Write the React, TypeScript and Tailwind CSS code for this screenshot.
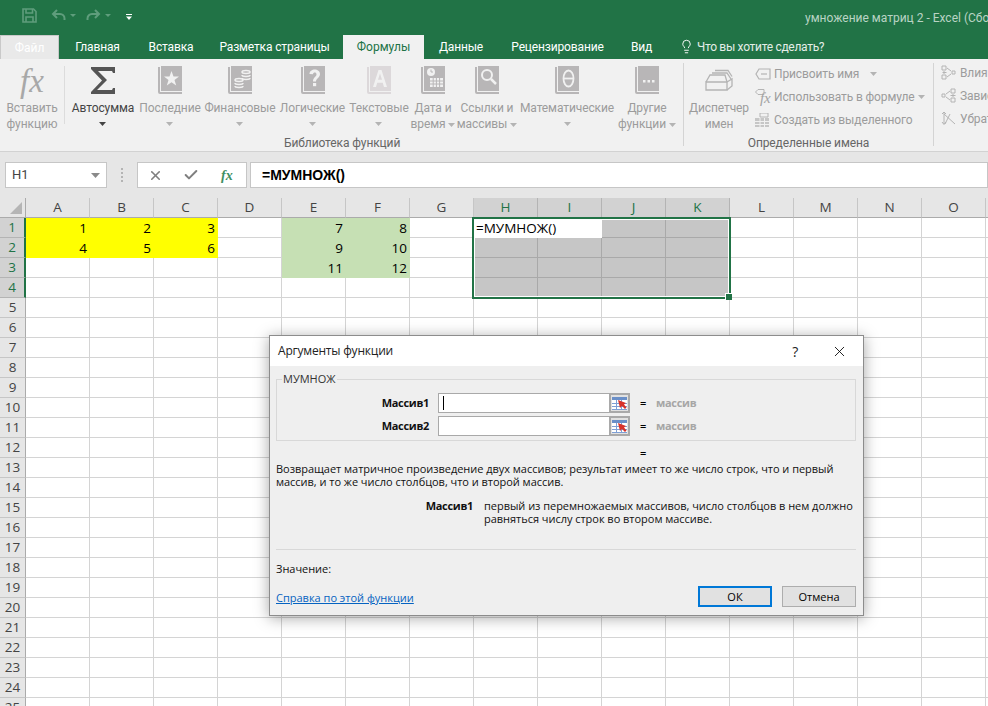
import { Check, Lightbulb, X } from "lucide-react";
import type { ReactNode } from "react";

const UI = "font-['Roboto',sans-serif]";
const COLS = ["A", "B", "C", "D", "E", "F", "G", "H", "I", "J", "K", "L", "M", "N", "O", "P"];
const ACTIVE_COLS = ["H", "I", "J", "K"];

const VALUES: Record<string, string> = {
  A1: "1", B1: "2", C1: "3", A2: "4", B2: "5", C2: "6",
  E1: "7", F1: "8", E2: "9", F2: "10", E3: "11", F3: "12",
};

function cellClass(col: string, row: number) {
  if (row <= 2 && (col === "A" || col === "B" || col === "C")) return "bg-[#ffff00] border-[#ffff00]";
  if (row <= 3 && (col === "E" || col === "F")) return "bg-[#c6e0b4] border-[#c6e0b4]";
  if (row === 1 && col === "H") return "bg-white border-white";
  if (row === 1 && col === "I") return "bg-white border-white";
  if (row <= 4 && ACTIVE_COLS.includes(col)) return "bg-[#c6c6c6] border-[#a9a9a9]";
  return "bg-white border-[#d4d4d4]";
}

function Caret({ dark = false }: { dark?: boolean }) {
  return (
    <svg width="7" height="4" viewBox="0 0 7 4" className="inline-block">
      <path d="M0 0h7L3.5 4z" fill={dark ? "#444444" : "#b4b4b4"} />
    </svg>
  );
}

function Book({ children }: { children?: ReactNode }) {
  return (
    <svg width="24" height="29" viewBox="0 0 24 29">
      <path d="M0 1h2v25h22v2H2a2 2 0 0 1-2-2z" fill="#b8b6b7" />
      <rect x="3" y="0" width="21" height="25" fill="#b8b6b7" />
      {children}
    </svg>
  );
}

function RibbonButton(props: { w: string; icon: ReactNode; lines: string[]; dark?: boolean; inlineCaret?: boolean }) {
  const { w, icon, lines, dark, inlineCaret } = props;
  return (
    <div className={`${w} flex flex-col items-center shrink-0`}>
      <div className="h-[34px] flex items-start justify-center">{icon}</div>
      <div className={`text-[12px] leading-[16px] tracking-[-0.1px] text-center whitespace-nowrap ${dark ? "text-[#444444]" : "text-[#9c9c9c]"}`}>
        <div>{lines[0]}</div>
        {lines[1] ? (
          <div>
            {lines[1]}
            {inlineCaret && (
              <span className="ml-[3px] align-middle inline-flex"><Caret /></span>
            )}
          </div>
        ) : (
          <div className="h-[16px] flex items-center justify-center"><Caret dark={dark} /></div>
        )}
      </div>
    </div>
  );
}

function TitleBar() {
  return (
    <div className="h-[35px] bg-[#217346] flex items-center relative">
      <svg width="15" height="15" viewBox="0 0 15 15" className="ml-[22px] mt-[-4px]" fill="none" stroke="#5f9d7c" strokeWidth="1.6">
        <path d="M1 1h10.5L14 3.5V14H1z" />
        <path d="M4 1v4h6.5V1M4 14V9h7v5" />
      </svg>
      <svg width="15" height="14" viewBox="0 0 15 14" className="ml-[14px] mt-[-4px]" fill="none" stroke="#5f9d7c" strokeWidth="2">
        <path d="M6 1 2 5l4 4M2 5h7a4.5 4.5 0 0 1 4.5 4.5V11" />
      </svg>
      <svg width="6" height="3" viewBox="0 0 6 3" className="ml-[4px] mt-[-4px]"><path d="M0 0h6L3 3z" fill="#5f9d7c" /></svg>
      <svg width="15" height="14" viewBox="0 0 15 14" className="ml-[10px] mt-[-4px]" fill="none" stroke="#5f9d7c" strokeWidth="2">
        <path d="m9 1 4 4-4 4M13 5H6a4.5 4.5 0 0 0-4.5 4.5V11" />
      </svg>
      <svg width="6" height="3" viewBox="0 0 6 3" className="ml-[4px] mt-[-4px]"><path d="M0 0h6L3 3z" fill="#5f9d7c" /></svg>
      <svg width="6" height="6" viewBox="0 0 6 6" className="ml-[15px] mt-[-2px]"><path d="M0 0h6v1H0zM0 2.5h6L3 6z" fill="#ffffff" /></svg>
      <div className={`${UI} absolute left-[805px] top-[10px] text-[12px] leading-[16px] text-[#b9d3c4] whitespace-nowrap`}>
        умножение матриц 2 - Excel (Сбой активации продукта)
      </div>
    </div>
  );
}

function Tabs() {
  const tab = "text-[12px] leading-[24px] tracking-[-0.15px] text-white whitespace-nowrap text-center shrink-0";
  return (
    <div className={`${UI} h-[24px] bg-[#217346] flex`}>
      <div className="w-[59px] h-[24px] bg-[#e9e9e9] border border-[#c9c9c9] border-b-0 text-[12px] leading-[24px] text-white text-center">Файл</div>
      <div className={`${tab} w-[77px]`}>Главная</div>
      <div className={`${tab} w-[70px]`}>Вставка</div>
      <div className={`${tab} w-[137px]`}>Разметка страницы</div>
      <div className="w-[81px] bg-[#f1f1f1] text-[12px] leading-[24px] text-[#217346] text-center">Формулы</div>
      <div className={`${tab} w-[74px]`}>Данные</div>
      <div className={`${tab} w-[119px]`}>Рецензирование</div>
      <div className={`${tab} w-[49px]`}>Вид</div>
      <Lightbulb size={15} strokeWidth={1.5} className="text-white ml-[13px] mt-[4px]" />
      <div className="ml-[3px] text-[12px] leading-[24px] tracking-[-0.3px] text-[#e4eee8] whitespace-nowrap">Что вы хотите сделать?</div>
    </div>
  );
}

function ListItem({ icon, label, caret }: { icon: ReactNode; label: string; caret?: string }) {
  return (
    <div className="h-[23px] flex items-center whitespace-nowrap text-[12px] tracking-[-0.12px] text-[#9c9c9c]">
      <span className="w-[19px] flex shrink-0">{icon}</span>
      <span>{label}</span>
      {caret && <span className={`${caret} inline-flex`}><Caret /></span>}
    </div>
  );
}

function Ribbon() {
  const bookGlyph = "#f1f1f1";
  return (
    <div className={`${UI} h-[93px] bg-[#f1f1f1] border-b border-[#d2d2d2] flex overflow-hidden`}>
      <div className="w-[66px] shrink-0 h-[92px] pt-[7px] flex">
        <div className="w-[65px] h-[58px] border-r border-[#dcdcdc] flex flex-col items-center">
          <RibbonButton
            w="w-[63px]"
            lines={["Вставить", "функцию"]}
            icon={<span className="font-['Liberation_Serif',serif] italic text-[33px] leading-[30px] text-[#a8a8a8]">fx</span>}
          />
        </div>
      </div>

      <div className="w-[618px] shrink-0 border-r border-[#d4d4d4] h-[83px] mt-[4px] relative">
        <div className="flex pl-[4px] pt-[3px]">
          <RibbonButton
            w="w-[66px]"
            dark
            lines={["Автосумма"]}
            icon={
              <svg width="24" height="27" viewBox="0 0 24 27" className="mt-[1px]">
                <path d="M0 0h24v6h-2l-1-2H7l9 9L6 23h15l1-2h2v6H0v-2l11-11.500L0 2z" fill="#555555" />
              </svg>
            }
          />
          <div className="w-[2px]" />
          <RibbonButton
            w="w-[64px]"
            lines={["Последние"]}
            icon={<Book><path d="m13.500 5 2 5.500h5.500l-4.500 3.500 1.700 5.500-4.700-3.300-4.700 3.300 1.700-5.500L6 10.500h5.500z" fill={bookGlyph} /></Book>}
          />
          <RibbonButton
            w="w-[76px]"
            lines={["Финансовые"]}
            icon={
              <Book>
                <g fill="none" stroke={bookGlyph} strokeWidth="1.500">
                  <ellipse cx="18" cy="6" rx="4" ry="1.500" />
                  <path d="M14 9c0 2 8 2 8 0M14 12c0 2 8 2 8 0" />
                  <ellipse cx="11" cy="14" rx="4" ry="1.500" />
                  <path d="M7 17c0 2 8 2 8 0M7 20c0 2 8 2 8 0" />
                </g>
              </Book>
            }
          />
          <RibbonButton
            w="w-[69px]"
            lines={["Логические"]}
            icon={
              <Book>
                <path d="M8.500 8c0-6 10.500-6 10.500 0 0 4-4 4-4 7.500h-3c0-4.500 3.500-4.500 3.500-7.300 0-2.200-3.500-2.200-3.500 0z" fill={bookGlyph} />
                <rect x="12" y="17" width="3.200" height="3.200" fill={bookGlyph} />
              </Book>
            }
          />
          <RibbonButton
            w="w-[64px]"
            lines={["Текстовые"]}
            icon={
              <svg width="24" height="29" viewBox="0 0 24 29">
                <path d="M0 1h2v25h22v2H2a2 2 0 0 1-2-2z" fill="#dcd8da" />
                <rect x="3" y="0" width="21" height="25" fill="#dcd8da" />
                <path d="m11.500 4 h3l5.500 17h-3l-1.300-4.300h-5.500L9 21H6zm1.500 3.500-2 6.300h4z" fill={bookGlyph} />
              </svg>
            }
          />
          <RibbonButton
            w="w-[44px]"
            lines={["Дата и", "время"]}
            inlineCaret
            icon={
              <Book>
                <circle cx="10" cy="6" r="4" fill={bookGlyph} />
                <path d="M10 3.500V6h2" stroke="#b8b6b7" fill="none" />
                <path d="M9 12h13v9H9z" fill={bookGlyph} />
                <path d="M12.200 12v9M15.400 12v9M18.600 12v9M9 15h13M9 18h13" stroke="#b8b6b7" />
              </Book>
            }
          />
          <div className="w-[2px]" />
          <RibbonButton
            w="w-[60px]"
            lines={["Ссылки и", "массивы"]}
            inlineCaret
            icon={
              <Book>
                <circle cx="12" cy="9" r="5" fill="none" stroke={bookGlyph} strokeWidth="2" />
                <path d="m16 13 5 5" stroke={bookGlyph} strokeWidth="2.500" />
              </Book>
            }
          />
          <RibbonButton
            w="w-[100px]"
            lines={["Математические"]}
            icon={
              <Book>
                <ellipse cx="13.500" cy="12.500" rx="5" ry="8" fill="none" stroke={bookGlyph} strokeWidth="1.800" />
                <path d="M9 12.500h9" stroke={bookGlyph} strokeWidth="1.800" />
              </Book>
            }
          />
          <RibbonButton
            w="w-[60px]"
            lines={["Другие", "функции"]}
            inlineCaret
            icon={
              <Book>
                <rect x="8" y="14" width="2.500" height="2.500" fill={bookGlyph} />
                <rect x="12.500" y="14" width="2.500" height="2.500" fill={bookGlyph} />
                <rect x="17" y="14" width="2.500" height="2.500" fill={bookGlyph} />
              </Book>
            }
          />
        </div>
        <div className="absolute left-[218px] top-[72px] text-[12px] leading-[16px] tracking-[-0.1px] text-[#666666]">Библиотека функций</div>
      </div>

      <div className="w-[250px] shrink-0 border-r border-[#d4d4d4] h-[83px] mt-[4px] relative">
        <div className="flex pl-[2px] pt-[3px]">
          <RibbonButton
            w="w-[66px]"
            lines={["Диспетчер", "имен"]}
            icon={
              <svg width="28" height="24" viewBox="0 0 28 24" className="mt-[3px]" fill="none" stroke="#b4b4b4" strokeWidth="1.300">
                <path d="M1 13h21v8H1z" />
                <path d="m22 21 5-4v-7l-5 3M1 13l4-7h15l2 7" />
                <path d="M7 4h15l4 6M10 1.500h13l4 6" />
              </svg>
            }
          />
          <div className="pl-[3px] mt-[-4px] w-[180px]">
            <ListItem
              label="Присвоить имя"
              caret="ml-[11px]"
              icon={
                <svg width="16" height="12" viewBox="0 0 16 12" fill="none" stroke="#b4b4b4" strokeWidth="1.200">
                  <path d="M4 1h11v10H4L1 6z" />
                  <path d="M6 6h6" />
                </svg>
              }
            />
            <ListItem
              label="Использовать в формуле"
              caret="ml-[3px]"
              icon={
                <span className="relative w-[16px] h-[16px] flex">
                  <svg width="10" height="8" viewBox="0 0 10 8" fill="none" stroke="#b4b4b4">
                    <path d="M3 .500h6v5H3L.500 3z" />
                  </svg>
                  <span className="absolute left-[5px] top-[1px] font-['Liberation_Serif',serif] italic text-[15px] leading-[16px] text-[#a3a3a3]">fx</span>
                </span>
              }
            />
            <ListItem
              label="Создать из выделенного"
              icon={
                <svg width="14" height="14" viewBox="0 0 14 14">
                  <path d="M0 5h14v9H0z" fill="#c6c6c6" />
                  <path d="M5 0h8v4H5z" fill="none" stroke="#b4b4b4" />
                  <path d="M0 8.500h14M0 11.500h14M5 5v9M9.500 5v9" stroke="#f1f1f1" />
                </svg>
              }
            />
          </div>
        </div>
        <div className="absolute left-0 right-0 top-[72px] text-center text-[12px] leading-[16px] tracking-[-0.1px] text-[#666666]">Определенные имена</div>
      </div>

      <div className="pl-[7px] pt-[2px]">
        <ListItem
          label="Влияющие ячейки"
          icon={<svg width="15" height="15" viewBox="0 0 15 15" fill="none" stroke="#b4b4b4"><path d="M1 1h4v4H1zM1 10h4v4H1zM11 6h3v3h-3zM3 6v3M1.500 7.500h4M6 3l4 3M6 12l4-3" /></svg>}
        />
        <ListItem
          label="Зависимые ячейки"
          icon={<svg width="15" height="15" viewBox="0 0 15 15" fill="none" stroke="#b4b4b4"><path d="M1 6h3v3H1zM10 1h4v4h-4zM10 10h4v4h-4zM12 6v3M9.500 7.500h5M5 6l4-3M5 9l4 3" /></svg>}
        />
        <ListItem
          label="Убрать стрелки"
          icon={<svg width="15" height="15" viewBox="0 0 15 15" fill="none" stroke="#b4b4b4"><path d="M3 1v12M1 11l2 2.500L5 11M1 3l2-2 2 2M3 3l11 10M9 3 4 13" /></svg>}
        />
      </div>
    </div>
  );
}

function FormulaBar() {
  return (
    <div className={`h-[46px] bg-[#e6e6e6] flex items-start pt-[10px] pl-[5px] ${UI}`}>
      <div className="w-[102px] h-[26px] bg-white border border-[#c6c6c6] flex items-center justify-between pl-[6px] pr-[6px] text-[13px] text-[#444444]">
        <span>H1</span>
        <svg width="9" height="5" viewBox="0 0 9 5"><path d="M0 0h9L4.500 5z" fill="#8a8a8a" /></svg>
      </div>
      <div className="w-[30px] h-[26px] flex flex-col items-center justify-center gap-[2px]">
        <span className="w-[2px] h-[2px] bg-[#b4b4b4]" />
        <span className="w-[2px] h-[2px] bg-[#b4b4b4]" />
        <span className="w-[2px] h-[2px] bg-[#b4b4b4]" />
        <span className="w-[2px] h-[2px] bg-[#b4b4b4]" />
      </div>
      <div className="w-[110px] h-[26px] bg-white border border-[#c6c6c6] flex items-center">
        <X size={15} strokeWidth={2.5} className="text-[#7f7f7f] ml-[10px]" />
        <Check size={16} strokeWidth={3} className="text-[#7f7f7f] ml-[20px]" />
        <span className="font-['Liberation_Serif',serif] italic font-bold text-[14px] text-[#3f8f63] ml-[22px]">fx</span>
      </div>
      <div className="flex-1 ml-[3px] h-[26px] bg-white border border-[#c6c6c6] pl-[11px] text-[14px] leading-[24px] font-bold text-black font-['Liberation_Sans',sans-serif]">
        =МУМНОЖ()
      </div>
    </div>
  );
}

function Sheet() {
  const rows = Array.from({ length: 25 }, (_, i) => i + 1);
  return (
    <div className="relative grid grid-cols-[26px_repeat(16,64px)] grid-rows-[20px] auto-rows-[20px] font-['Open_Sans',sans-serif] text-[13.500px]">
      <div className="bg-[#e6e6e6] border-r border-b border-[#ababab] flex items-end justify-end pr-[3px] pb-[3px]">
        <svg width="12" height="12" viewBox="0 0 12 12"><path d="M12 0v12H0z" fill="#b5b5b5" /></svg>
      </div>
      {COLS.map((c) => (
        <div
          key={c}
          className={`border-b border-[#ababab] border-r flex items-center justify-center leading-none ${
            ACTIVE_COLS.includes(c) ? "bg-[#d2d2d2] text-[#217346] border-r-[#b4b4b4]" : "bg-[#e6e6e6] text-[#444444] border-r-[#c6c6c6]"
          }`}
        >
          {c}
        </div>
      ))}
      {rows.map((r) => (
        <div key={r} className="contents">
          <div
            className={`border-b flex items-center justify-center leading-none ${
              r <= 4
                ? "bg-[#d2d2d2] text-[#217346] border-b-[#b4b4b4] border-r-2 border-r-[#217346]"
                : "bg-[#e6e6e6] text-[#444444] border-b-[#c6c6c6] border-r border-r-[#ababab]"
            }`}
          >
            {r}
          </div>
          {COLS.map((c) => (
            <div
              key={c}
              className={`border-r border-b text-right pr-[2px] leading-[20px] text-black whitespace-nowrap ${cellClass(c, r)}`}
            >
              {VALUES[c + r]}
              {c === "H" && r === 1 && <span className="block text-left pl-[2px] -mr-[60px] relative z-[1]">=МУМНОЖ()</span>}
            </div>
          ))}
        </div>
      ))}
      <div className="absolute left-[472px] top-[19px] w-[259px] h-[82px] border-2 border-[#217346] pointer-events-none">
        <div className="w-full h-full border border-white" />
        <div className="absolute right-[-3px] bottom-[-3px] w-[7px] h-[7px] bg-[#217346] border-l border-t border-white" />
      </div>
    </div>
  );
}

function RefInput({ label, caret }: { label: string; caret?: boolean }) {
  return (
    <div className="flex items-center h-[20px] mb-[3px]">
      <div className="w-[161px] text-right text-[11px] font-bold tracking-[-0.3px] text-[#111111] pr-[9px] shrink-0">{label}</div>
      <div className="w-[171px] h-[20px] bg-white border border-[#a9a9a9] border-r-0 flex items-center pl-[4px] shrink-0">
        {caret && <span className="w-px h-[14px] bg-black" />}
      </div>
      <div className="w-[21px] h-[20px] bg-[#e1e1e1] border-2 border-[#a9a9a9] flex items-center justify-center shrink-0">
        <svg width="15" height="13" viewBox="0 0 15 13">
          <rect x="0" y="0" width="15" height="3" fill="#6a8fc8" />
          <path d="M0 3h15v10H0z" fill="#ffffff" />
          <path d="M0 6.500h15M0 9.500h15M0 12.500h15M4.500 3v10M9.500 3v10" stroke="#7e9fd4" />
          <path d="m6 3 8 3-2 1.500 2.500 3-1.500 1.500-3-3-2 2z" fill="#d8322a" />
        </svg>
      </div>
      <div className="ml-[10px] w-[16px] text-[11px] font-semibold text-black shrink-0">=</div>
      <div className="text-[11px] font-bold tracking-[-0.3px] text-[#a6a6a6]">массив</div>
    </div>
  );
}

function Dialog() {
  const body = "text-[11px] leading-[13px] tracking-[-0.03px] text-[#111111]";
  return (
    <div className="absolute left-[269px] top-[335px] w-[595px] h-[281px] bg-[#efefef] border border-[#8c8c8c] shadow-[0_2px_14px_rgba(0,0,0,0.35)] font-['Open_Sans',sans-serif]">
      <div className="h-[30px] bg-white flex items-center pl-[8px] text-[12px] tracking-[-0.2px] text-[#222222]">
        <span className="flex-1">Аргументы функции</span>
        <span className="text-[14px] mr-[33px]">?</span>
        <X size={17} strokeWidth={1.2} className="text-black mr-[15px]" />
      </div>
      <div className="pl-[6px] pr-[7px]">
        <div className="relative mt-[13px] h-[62px] border border-[#d8d8d8] pt-[13px]">
          <div className="absolute left-[5px] top-[-8px] bg-[#efefef] px-px text-[11px] leading-[14px] text-[#333333]">МУМНОЖ</div>
          <RefInput label="Массив1" caret />
          <RefInput label="Массив2" />
        </div>
        <div className="pl-[364px] h-[21px] pt-[5px] text-[11px] leading-[13px] font-semibold text-black">=</div>
        <p className={`${body} w-[575px]`}>
          Возвращает матричное произведение двух массивов; результат имеет то же число строк, что и первый
          <br />
          массив, и то же число столбцов, что и второй массив.
        </p>
        <div className={`${body} flex mt-[11px]`}>
          <div className="w-[197px] text-right font-bold tracking-[-0.3px] shrink-0">Массив1</div>
          <div className="ml-[11px]">
            первый из перемножаемых массивов, число столбцов в нем должно
            <br />
            равняться числу строк во втором массиве.
          </div>
        </div>
        <div className="border-t border-[#d8d8d8] mt-[24px]" />
        <div className={`${body} mt-[12px]`}>Значение:</div>
        <div className="flex items-start mt-[11px]">
          <a className="text-[11px] leading-[13px] text-[#0563c1] underline mt-[5px] flex-1">Справка по этой функции</a>
          <button className="w-[74px] h-[21px] bg-[#e1e1e1] border-2 border-[#0078d7] text-[11px] leading-none text-black mr-[10px]">ОК</button>
          <button className="w-[74px] h-[21px] bg-[#e1e1e1] border border-[#adadad] text-[11px] leading-none text-black">Отмена</button>
        </div>
      </div>
    </div>
  );
}

export default function App() {
  return (
    <div className="relative w-[988px] h-[706px] overflow-hidden bg-white">
      <TitleBar />
      <Tabs />
      <Ribbon />
      <FormulaBar />
      <Sheet />
      <Dialog />
    </div>
  );
}
